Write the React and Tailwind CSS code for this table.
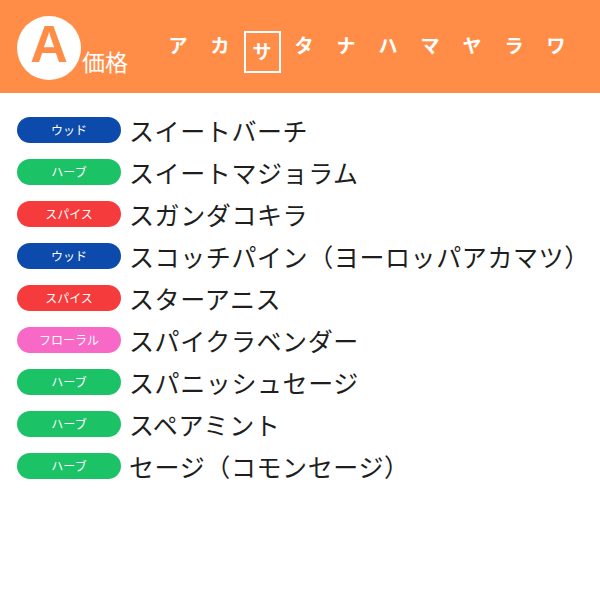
import React from "react";

const kana = ["ア", "カ", "サ", "タ", "ナ", "ハ", "マ", "ヤ", "ラ", "ワ"];

const tags = {
  wood: { label: "ウッド", cls: "bg-[#0c4aab]" },
  herb: { label: "ハーブ", cls: "bg-[#1cc266]" },
  spice: { label: "スパイス", cls: "bg-[#f63b3c]" },
  floral: { label: "フローラル", cls: "bg-[#f868c6]" },
};

const items = [
  { tag: "wood", name: "スイートバーチ" },
  { tag: "herb", name: "スイートマジョラム" },
  { tag: "spice", name: "スガンダコキラ" },
  { tag: "wood", name: "スコッチパイン（ヨーロッパアカマツ）" },
  { tag: "spice", name: "スターアニス" },
  { tag: "floral", name: "スパイクラベンダー" },
  { tag: "herb", name: "スパニッシュセージ" },
  { tag: "herb", name: "スペアミント" },
  { tag: "herb", name: "セージ（コモンセージ）" },
];

export default function App() {
  return (
    <div className="w-[600px] h-[600px] bg-white font-['Noto_Sans_CJK_JP',sans-serif]">
      <header className="h-[93px] bg-[#ff8d47] flex items-center pl-[17px]">
        <div className="w-16 h-16 mt-[3px] rounded-full bg-white flex items-center justify-center">
          <span className="text-[52px] leading-none font-bold text-[#ff8d47] font-['Liberation_Sans',sans-serif] -mt-[8px]">
            A
          </span>
        </div>
        <span className="ml-px mt-[30px] text-[23px] leading-none text-white">価格</span>
        <nav className="ml-[29px] mt-[10px] flex">
          {kana.map((k) =>
            k === "サ" ? (
              <div key={k} className="w-[42px] flex justify-center">
                <span className="w-[37px] h-[42px] border-2 border-white flex items-center justify-center text-[19px] font-bold text-white">
                  {k}
                </span>
              </div>
            ) : (
              <span key={k} className="w-[42px] text-center text-[19px] font-bold text-white">
                {k}
              </span>
            )
          )}
        </nav>
      </header>
      <ul className="pt-[16px]">
        {items.map((it, i) => (
          <li key={i} className="h-[42px] flex items-center pl-[17px]">
            <span
              className={`w-[104px] h-[26px] rounded-full flex items-center justify-center text-[12px] text-white ${tags[it.tag].cls}`}
            >
              {tags[it.tag].label}
            </span>
            <span className="ml-[8px] text-[25px] tracking-[0.6px] leading-none text-[#1e1e1e]">{it.name}</span>
          </li>
        ))}
      </ul>
    </div>
  );
}
